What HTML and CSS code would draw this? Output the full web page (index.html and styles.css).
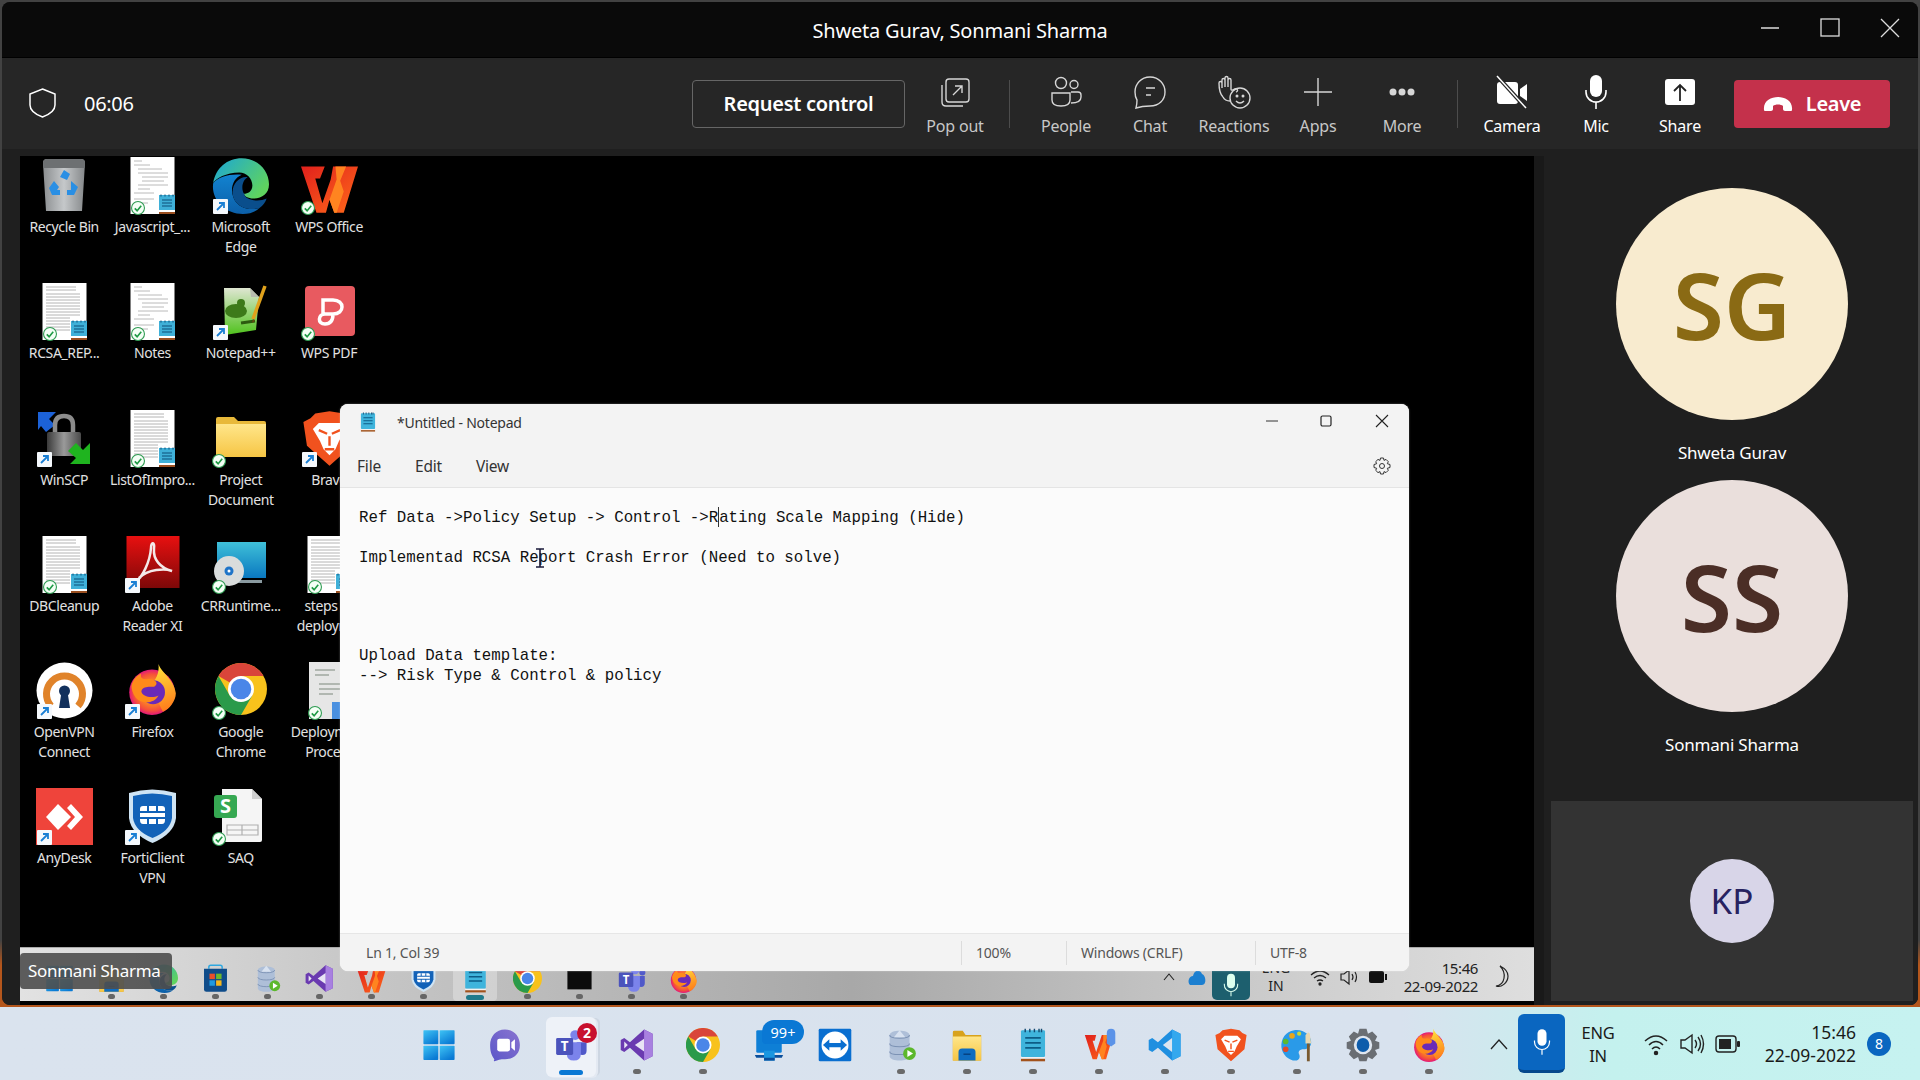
FILE: index.html
```html
<!DOCTYPE html>
<html lang="en">
<head>
  <meta charset="UTF-8" />
  <title>Shweta Gurav, Sonmani Sharma</title>
  <link rel="stylesheet" href="styles.css">
</head>
<body>
  <svg class="sprite" aria-hidden="true">
    <defs>
      <linearGradient id="g-edge" x1="0" y1="0" x2="1" y2="0.6"><stop offset="0" stop-color="#1aa6d8"/><stop offset="1" stop-color="#5fd35f"/></linearGradient>
      <linearGradient id="g-edge2" x1="0" y1="0" x2="0" y2="1"><stop offset="0" stop-color="#1283d0"/><stop offset="1" stop-color="#0c5fa8"/></linearGradient>
      <linearGradient id="g-wps" x1="0" y1="0" x2="1" y2="1"><stop offset="0" stop-color="#e0201c"/><stop offset="1" stop-color="#ff6a1a"/></linearGradient>
      <linearGradient id="g-bin" x1="0" y1="0" x2="1" y2="0"><stop offset="0" stop-color="#8b8e90"/><stop offset="0.5" stop-color="#c5c8ca"/><stop offset="1" stop-color="#85888a"/></linearGradient>
      <linearGradient id="g-npp" x1="0" y1="0" x2="0" y2="1"><stop offset="0" stop-color="#dfe6d2"/><stop offset="1" stop-color="#4fc21c"/></linearGradient>
      <linearGradient id="g-folder" x1="0" y1="0" x2="0" y2="1"><stop offset="0" stop-color="#ffe68a"/><stop offset="1" stop-color="#f6c544"/></linearGradient>
      <linearGradient id="g-adobe" x1="0" y1="0" x2="0" y2="1"><stop offset="0" stop-color="#e81010"/><stop offset="1" stop-color="#7d0808"/></linearGradient>
      <linearGradient id="g-cr" x1="0" y1="0" x2="0" y2="1"><stop offset="0" stop-color="#3fc0d8"/><stop offset="1" stop-color="#0a78c0"/></linearGradient>
      <linearGradient id="g-lock" x1="0" y1="0" x2="1" y2="0"><stop offset="0" stop-color="#3a3a3a"/><stop offset="0.5" stop-color="#9a9a9a"/><stop offset="1" stop-color="#4a4a4a"/></linearGradient>
      <linearGradient id="g-win" x1="0" y1="0" x2="0.6" y2="1"><stop offset="0" stop-color="#3fc4f5"/><stop offset="1" stop-color="#0a7ad4"/></linearGradient>
      <linearGradient id="g-meet" x1="1" y1="0" x2="0" y2="1"><stop offset="0" stop-color="#8a74d0"/><stop offset="1" stop-color="#5a56c8"/></linearGradient>
      <radialGradient id="g-fox"><stop offset="0.35" stop-color="#ff9f1a"/><stop offset="0.8" stop-color="#f5503a"/><stop offset="1" stop-color="#e3187a"/></radialGradient>
      <linearGradient id="g-flame" x1="0.4" y1="0" x2="0.6" y2="1"><stop offset="0" stop-color="#ffe13a"/><stop offset="1" stop-color="#ff7a1a"/></linearGradient>

      <symbol id="i-bin" viewBox="0 0 57 57">
        <path d="M7 6Q7 2 11 2H45Q49 2 49 6L46 54H10Z" fill="url(#g-bin)"/>
        <path d="M7 6Q7 2 11 2H45Q49 2 49 6L48.500 11H7.500Z" fill="#6d7072"/>
        <path d="M28 13L34 17 31 23 24 20ZM35 24L42 30 38 38 31 38 31 33 35 33ZM18 24L23 30 21 33 24 33 24 38 16 38 13 31Z" fill="#2a8fe4"/>
      </symbol>
      <symbol id="i-doc" viewBox="0 0 57 57">
        <rect x="6.500" y="0" width="44" height="57" fill="#fff"/>
        <path d="M10 4h8M10 8h16M14 12h24M14 16h30M18 20h26M18 24h22M14 28h30M14 32h12M10 36h20M10 42h20M10 46h14" stroke="#a8a8a8" stroke-width=".8"/>
        <rect x="35" y="38" width="16" height="15" fill="#3fb0d8"/>
        <path d="M38 43h10M38 46h10M38 49h10M37 37.500v2M41 37.500v2M45 37.500v2M49 37.500v2" stroke="#0d4f78" stroke-width="1"/>
        <rect x="35" y="53" width="16" height="2" fill="#fff"/><rect x="35" y="55" width="16" height="2" fill="#9a4f20"/>
      </symbol>
      <symbol id="i-doc2" viewBox="0 0 57 57">
        <rect x="6.500" y="0" width="44" height="57" fill="#fff"/>
        <path d="M10 4h30M10 7h30M10 11h34M10 14h34M10 17h34M10 20h34M10 23h34M10 26h34M10 29h34M10 32h34M10 35h24M10 38h24M10 41h24M10 44h24M10 47h24" stroke="#b4b4b4" stroke-width="1"/>
        <rect x="35" y="38" width="16" height="15" fill="#3fb0d8"/>
        <path d="M38 43h10M38 46h10M38 49h10M37 37.500v2M41 37.500v2M45 37.500v2M49 37.500v2" stroke="#0d4f78" stroke-width="1"/>
        <rect x="35" y="53" width="16" height="2" fill="#fff"/><rect x="35" y="55" width="16" height="2" fill="#9a4f20"/>
      </symbol>
      <symbol id="i-doc3" viewBox="0 0 57 57">
        <rect x="8" y="0" width="44" height="57" fill="#e6e6e6"/>
        <path d="M14 8h20M14 13h14M18 22h22M18 27h22M18 32h14" stroke="#a0a8a0" stroke-width="1.500"/>
        <rect x="31" y="40" width="26" height="17" fill="#4a90e0"/>
      </symbol>
      <symbol id="i-edge" viewBox="0 0 48 48">
        <path d="M1 22C3 9 13 1 25 1 38 1 48 11 48 23 48 31 42 35 35 35 30 35 27 33 27 31 30 31 34 29 34 24 34 18 29 13 23 13 12 13 3 18 1 22Z" fill="url(#g-edge)"/>
        <path d="M1 22C-1 36 11 48 26 48 32 48 37 46 40 43 33 45 22 44 18 34 15 26 18 18 25 15 15 14 5 17 1 22Z" fill="url(#g-edge2)"/>
        <path d="M18 34C22 44 33 45 40 43 43 41 45 38 46 35 40 38 28 37 27 31 24 26 26 19 30 17 22 16 15 25 18 34Z" fill="#0a4e8c"/>
      </symbol>
      <symbol id="i-wps" viewBox="0 0 48 48">
        <g transform="translate(0 5)">
          <path d="M0 3H20L16 13H12L18 34 25 14 27 3H48L36 42H28L24 31 21 42H13Z" fill="url(#g-wps)"/>
          <path d="M29 3H38L33 15 36 24 30 42H28L24 31 30 14Z" fill="#ff8420"/>
        </g>
      </symbol>
      <symbol id="i-wpspdf" viewBox="0 0 57 57">
        <rect x="4" y="3" width="50" height="50" rx="4" fill="#e85a60"/>
        <path d="M22 33V17H32C44 17 44 31 32 31H24C17 31 16 41 24 41 31 41 32 35 32 31" fill="none" stroke="#fff" stroke-width="3.500"/>
      </symbol>
      <symbol id="i-npp" viewBox="0 0 57 57">
        <path d="M12 5H38L47 14 44 47 13 52Z" fill="url(#g-npp)"/>
        <path d="M38 5L47 14H39Z" fill="#b8bcb0"/>
        <ellipse cx="24" cy="28" rx="11" ry="7" fill="#3d7a1a"/><circle cx="29" cy="20" r="4" fill="#3d7a1a"/>
        <path d="M29 40l14-2" stroke="#2c5a10" stroke-width="3"/>
        <path d="M41 36L53 3" stroke="#e0a21c" stroke-width="3.500"/><path d="M41 36L40 40 43 38Z" fill="#6a4a10"/>
      </symbol>
      <symbol id="i-winscp" viewBox="0 0 57 57">
        <path d="M2 2H20L13 9 19 15 10 22 5 16 2 20Z" fill="#1c62d8"/>
        <path d="M19 23V15Q19 6 28 6T37 15V23" fill="none" stroke="#8c8c8c" stroke-width="4.500"/>
        <rect x="11" y="22" width="34" height="24" rx="2" fill="url(#g-lock)"/>
        <path d="M54 33V54H34L40 48 32 41 40 33 47 40Z" fill="#1fb41f"/>
      </symbol>
      <symbol id="i-folder" viewBox="0 0 57 57">
        <path d="M4 9Q4 7 6 7H22L26 11H52Q54 11 54 13V47H4Z" fill="#e8b93a"/>
        <path d="M4 14H54V45Q54 47 52 47H6Q4 47 4 45Z" fill="url(#g-folder)"/>
      </symbol>
      <symbol id="i-brave" viewBox="0 0 48 48">
        <path d="M24 1L36 3 40 7 46 10 43 30 24 47 5 30 2 10 8 7 12 3Z" fill="#f1521e"/>
        <path d="M24 11H33L38 16 32 26 29 33 24 38 19 33 16 26 10 16 15 11Z" fill="#fff"/>
        <path d="M15 17L22 20M33 17L26 20M24 22V30M20 33H28" stroke="#f1521e" stroke-width="2" fill="none"/>
      </symbol>
      <symbol id="i-adobe" viewBox="0 0 57 57">
        <rect x="2.500" y="0" width="53" height="52" fill="url(#g-adobe)"/>
        <path d="M12 45C18 42 26 26 27 12 27 5 31 6 30 13 29 23 36 32 48 35 41 32 24 33 15 42" fill="none" stroke="#f4e8e8" stroke-width="2.500"/>
      </symbol>
      <symbol id="i-cr" viewBox="0 0 57 57">
        <rect x="5" y="6" width="49" height="36" fill="url(#g-cr)"/>
        <path d="M24 44H50V47H24Z" fill="#8a9aa0"/>
        <circle cx="17" cy="35" r="15" fill="#d9dcdc"/><circle cx="17" cy="35" r="4.500" fill="#1f74c8"/><circle cx="17" cy="35" r="1.500" fill="#fff"/>
      </symbol>
      <symbol id="i-ovpn" viewBox="0 0 57 57">
        <circle cx="28.500" cy="28.500" r="28" fill="#fff"/>
        <path d="M15 44A18 18 0 1 1 42 44" fill="none" stroke="#e0832a" stroke-width="7"/>
        <circle cx="28.500" cy="29" r="5.500" fill="#12305c"/><path d="M25.500 30H31.500L34 46H23Z" fill="#12305c"/>
      </symbol>
      <symbol id="i-fox" viewBox="0 0 48 48">
        <circle cx="24" cy="27" r="21" fill="url(#g-fox)"/>
        <path d="M30 1C33 10 44 14 46 28 46 35 40 43 34 45L22 20C27 17 31 10 30 1Z" fill="url(#g-flame)"/>
        <circle cx="25" cy="27" r="11" fill="#6a2ab8"/>
        <path d="M5 21C7 14 11 11 14 10 13 14 15 15 19 15 27 14 31 19 26 22 22 22 16 21 14 26 15 31 24 33 30 30 26 38 14 38 9 32 6 28 5 24 5 21Z" fill="#ff8a1a"/>
      </symbol>
      <symbol id="i-chrome" viewBox="0 0 48 48">
        <circle cx="24" cy="24" r="24" fill="#f8c21c"/>
        <path d="M3.200 12A24 24 0 0 1 44.800 12H24L13.600 18Z" fill="#d9453a"/>
        <path d="M24 48A24 24 0 0 1 3.200 12L13.600 30H34.400Z" fill="#2a9a4a"/>
        <circle cx="24" cy="24" r="12" fill="#fff"/><circle cx="24" cy="24" r="9.500" fill="#4a86e8"/>
      </symbol>
      <symbol id="i-anydesk" viewBox="0 0 57 57">
        <rect width="57" height="57" fill="#ef443b"/>
        <path d="M22 16L35 29 22 42 10 29Z" fill="#fff"/>
        <path d="M35 16L47 29 35 42 31 38 39 29 31 20Z" fill="#fff"/>
      </symbol>
      <symbol id="i-forti" viewBox="0 0 57 57">
        <path d="M5 5Q28 -2 52 5V30Q50 46 28.500 55 7 46 5 30Z" fill="#cfe4f4"/>
        <path d="M9 8Q28 3 48 8V30Q46 43 28.500 50 11 43 9 30Z" fill="#1262b8"/>
        <path d="M19 18H38Q41 18 41 21V32Q41 36 38 36H19Q16 36 16 32V21Q16 18 19 18Z" fill="#fff"/>
        <path d="M16 24H41M16 30H41M24 18V24M33 18V24M24 30V36M33 30V36" stroke="#1262b8" stroke-width="2"/>
      </symbol>
      <symbol id="i-saq" viewBox="0 0 57 57">
        <path d="M10 1H40L50 11V52Q50 54 48 54H12Q10 54 10 52Z" fill="#f5f5f5"/>
        <path d="M40 1L50 11H40Z" fill="#cfcfcf"/>
        <rect x="2" y="7" width="23" height="23" rx="3" fill="#36a852"/>
        <text x="13.500" y="25" class="svg-s">S</text>
        <path d="M15 37H46V47H15ZM15 42H46M30 37V47" fill="none" stroke="#b0b0b0" stroke-width="1.200"/>
      </symbol>
      <symbol id="i-notepad" viewBox="0 0 48 48">
        <rect x="7" y="3" width="34" height="38" rx="2" fill="#3fb4dc"/>
        <path d="M13 14H35M13 21H35M13 28H35" stroke="#0d5c86" stroke-width="2.500"/>
        <path d="M13 1V6M19.500 1V6M26 1V6M32.500 1V6M36 1V6" stroke="#134a70" stroke-width="2"/>
        <rect x="7" y="41" width="34" height="2.500" fill="#f2f2f2"/><rect x="7" y="43.500" width="34" height="3.500" fill="#a2521c"/>
      </symbol>
      <symbol id="i-vs" viewBox="0 0 48 48">
        <path d="M34 2L46 8V40L34 46 14 28 6 34 1 31V17L6 14 14 20Z" fill="#6a3ab0"/>
        <path d="M34 2L46 8V40L34 46Z" fill="#a880e0"/>
        <path d="M34 15V33L21 24Z" fill="#e8e4f4"/>
        <path d="M6 19V29L11 24Z" fill="#e8e4f4"/>
      </symbol>
      <symbol id="i-win" viewBox="0 0 48 48">
        <rect x="2" y="3" width="21" height="20" rx="1" fill="url(#g-win)"/><rect x="25" y="3" width="21" height="20" rx="1" fill="url(#g-win)"/>
        <rect x="2" y="25" width="21" height="20" rx="1" fill="url(#g-win)"/><rect x="25" y="25" width="21" height="20" rx="1" fill="url(#g-win)"/>
      </symbol>
      <symbol id="i-meet" viewBox="0 0 48 48">
        <path d="M24 2C37 2 45 12 45 24 45 37 36 44 24 44 20 44 16 44 9 47 8 47 8 46 9 44 4 38 3 31 3 24 3 12 11 2 24 2Z" fill="url(#g-meet)"/>
        <rect x="13" y="15" width="18" height="18" rx="3" fill="#fff"/><path d="M33 20L38 16V32L33 28Z" fill="#fff"/>
      </symbol>
      <symbol id="i-teams" viewBox="0 0 48 48">
        <circle cx="30" cy="10" r="7" fill="#7b83eb"/><circle cx="42" cy="14" r="5" fill="#5059c9"/>
        <path d="M32 20H46V32Q46 38 40 38 34 38 34 32Z" fill="#5059c9"/>
        <path d="M18 20H38V36Q38 46 28 46 18 46 18 36Z" fill="#7b83eb"/>
        <rect x="3" y="14" width="24" height="24" rx="2" fill="#4b53bc"/>
        <text x="15" y="33" class="svg-t">T</text>
      </symbol>
      <symbol id="i-store" viewBox="0 0 48 48">
        <path d="M4 38H44L42 42H6Z" fill="#0a4f9c"/>
        <rect x="6" y="3" width="36" height="32" rx="2" fill="#0e7fd6"/>
        <rect x="17" y="32" width="15" height="14" fill="#1a96e0"/><rect x="17" y="42" width="15" height="4" fill="#0a4f9c"/>
      </symbol>
      <symbol id="i-tv" viewBox="0 0 48 48">
        <rect x="1" y="1" width="46" height="46" rx="2" fill="#0a6fd0"/>
        <circle cx="24" cy="24" r="19" fill="#fff"/>
        <path d="M7 24L16 16V21H32V16L41 24 32 32V27H16V32Z" fill="#0a6fd0"/>
      </symbol>
      <symbol id="i-db" viewBox="0 0 48 48">
        <path d="M8 10C8 2 36 2 36 10V40C36 48 8 48 8 40Z" fill="#aebfd8"/>
        <path d="M8 10C8 16 36 16 36 10M8 22C8 28 36 28 36 22M8 33C8 39 36 39 36 33" fill="none" stroke="#7c92b4" stroke-width="1.500"/>
        <path d="M22 3L30 13H14Z" fill="#d8e2f0"/>
        <circle cx="36" cy="36" r="9" fill="#5cb82c"/><path d="M33 31L41 36 33 41Z" fill="#fff"/>
      </symbol>
      <symbol id="i-explorer" viewBox="0 0 48 48">
        <path d="M4 6Q4 4 6 4H18L22 10H44V46H4Z" fill="#d8a21c"/>
        <path d="M4 12H44V46H4Z" fill="url(#g-folder)"/>
        <path d="M12 46V34Q12 29 17 29H31Q36 29 36 34V46Z" fill="#0e6cc0"/>
        <path d="M19 37H29" stroke="#063f7c" stroke-width="2"/>
      </symbol>
      <symbol id="i-wpsbar" viewBox="0 0 48 48">
        <g transform="translate(4 0)">
          <path d="M0 10H16L14 18H11L16 34 22 16 24 10H40L30 44H24L20 34 17 44H11Z" fill="url(#g-wps)"/>
          <path d="M26 10H33L29 20 31 26 26 44H24L20 34 26 18Z" fill="#ff8420"/>
          <path d="M31 7Q31 1 37 1T43 7V22L37 26 31 22Z" fill="#5b93e8"/>
        </g>
      </symbol>
      <symbol id="i-code" viewBox="0 0 48 48">
        <path d="M34 2L46 8V40L34 46 14 28 6 34 1 31V17L6 14 14 20Z" fill="#1f8fe0"/>
        <path d="M34 2L46 8V40L34 46Z" fill="#34a8ee"/>
        <path d="M34 14V34L21 24Z" fill="#dbe5f0"/>
      </symbol>
      <symbol id="i-paint" viewBox="0 0 48 48">
        <path d="M20 3C8 5 1 15 2 27 3 37 12 46 22 46 27 46 29 41 27 37 25 33 28 30 33 30 40 30 44 26 44 20 44 10 33 1 20 3Z" fill="#2a9ae8"/>
        <circle cx="17" cy="11" r="4" fill="#e8a61c"/><circle cx="8" cy="19" r="4" fill="#5cb82c"/><circle cx="27" cy="8" r="3" fill="#c8d83a"/><circle cx="8" cy="30" r="4" fill="#e04a2a"/>
        <path d="M36 22H44L42 8 40 6 36 10Z" fill="#e8d8b0"/><rect x="38" y="22" width="4" height="25" fill="#7a5a30"/>
      </symbol>
      <symbol id="i-gear" viewBox="0 0 48 48">
        <path d="M19 1H29L31 8 37 5 44 12 41 18 47 20V29L41 31 44 37 37 44 31 41 29 47H19L17 41 11 44 4 37 7 31 1 29V20L7 18 4 12 11 5 17 8Z" fill="#6a6e73"/>
        <circle cx="24" cy="24" r="13" fill="#dfe6ef"/><ellipse cx="24" cy="24" rx="9" ry="10" fill="#0d5cab"/>
      </symbol>
      <symbol id="i-bag" viewBox="0 0 48 48">
        <path d="M13 8V5Q13 2 16 2H32Q35 2 35 5V8" fill="none" stroke="#2fa8e0" stroke-width="2.500"/>
        <path d="M5 8H43V42Q43 46 39 46H9Q5 46 5 42Z" fill="#0f4c8a"/>
        <rect x="14" y="16" width="9" height="9" fill="#e8502a"/><rect x="25" y="16" width="9" height="9" fill="#6cb82c"/>
        <rect x="14" y="27" width="9" height="9" fill="#1f9ae0"/><rect x="25" y="27" width="9" height="9" fill="#f5b71c"/>
      </symbol>
      <symbol id="i-term" viewBox="0 0 48 48"><rect x="4" y="6" width="40" height="36" fill="#0b0b0b"/><path d="M4 6H44V12H4Z" fill="#3a3a3a"/></symbol>
      <symbol id="i-sc" viewBox="0 0 15 15">
        <rect width="15" height="15" rx="1" fill="#f4f8fc"/>
        <path d="M4 11L11 4M6 4H11V9" fill="none" stroke="#1a7fd4" stroke-width="1.800"/>
      </symbol>
      <symbol id="i-chk" viewBox="0 0 13 13">
        <circle cx="6.500" cy="6.500" r="6" fill="#f4fff6" stroke="#2c9a50" stroke-width="1"/>
        <path d="M3.500 6.800L5.700 9 9.500 4.500" fill="none" stroke="#1f9a45" stroke-width="1.500"/>
      </symbol>
      <symbol id="i-mic" viewBox="0 0 24 36">
        <rect x="6" y="1" width="12" height="22" rx="6"/>
        <path d="M2 16V18A10 10 0 0 0 22 18V16M12 28V35" fill="none" stroke="currentColor" stroke-width="1.600"/>
      </symbol>
    </defs>
  </svg>

  <div class="teams">
    <div class="titlebar">
      <span></span>
      <div class="title">Shweta Gurav, Sonmani Sharma</div>
      <div class="win-ctl">
        <button class="ctl"><svg width="20" height="20" viewBox="0 0 20 20"><path d="M1 10H19" stroke="#ddd" stroke-width="1.300"/></svg></button>
        <button class="ctl"><svg width="20" height="20" viewBox="0 0 20 20"><rect x="1" y="1" width="18" height="17" fill="none" stroke="#ddd" stroke-width="1.300"/></svg></button>
        <button class="ctl"><svg width="20" height="20" viewBox="0 0 20 20"><path d="M1 1L19 19M19 1L1 19" stroke="#ddd" stroke-width="1.300"/></svg></button>
      </div>
    </div>

    <div class="toolbar">
      <svg class="shield" width="27" height="30" viewBox="0 0 27 30"><path d="M13.500 1L26 6V17C26 23 19 27 13.500 29 8 27 1 23 1 17V6Z" fill="none" stroke="#fff" stroke-width="1.500"/></svg>
      <span class="timer">06:06</span>
      <div class="tools">
        <button class="req">Request control</button>
        <div class="tool"><svg width="32" height="32" viewBox="0 0 32 32" fill="none" stroke="#d6d6d6" stroke-width="1.400"><rect x="7" y="3" width="23" height="23" rx="3"/><path d="M3 9V26Q3 30 7 30H24M14 19L23 10M16 10H23V17"/></svg><span>Pop out</span></div>
        <i class="sep"></i>
        <div class="tool"><svg width="32" height="32" viewBox="0 0 32 32" fill="none" stroke="#d6d6d6" stroke-width="1.400"><circle cx="11" cy="7" r="5.500"/><circle cx="24" cy="8.500" r="4"/><path d="M2 17H20V24C20 28 17 30 11 30 5 30 2 28 2 24ZM21 16H28Q31 16 31 19V21C31 25 27 27 21 27"/></svg><span>People</span></div>
        <div class="tool"><svg width="32" height="34" viewBox="0 0 32 34" fill="none" stroke="#d6d6d6" stroke-width="1.400"><path d="M16 2C25 2 31 9 31 17 31 25 25 31 16 31 13 31 8 31 2 33 3 29 3 27 3 25 1 22 1 19 1 17 1 9 7 2 16 2Z"/><path d="M12 13H21M12 20H17"/></svg><span>Chat</span></div>
        <div class="tool"><svg width="34" height="34" viewBox="0 0 34 34" fill="none" stroke="#d6d6d6" stroke-width="1.400"><path d="M6 22C3 19 2 14 2 8 2 6 5 6 5 8V13M5 10V5C5 3 8 3 8 5V12M8 5V3C8 1 11 1 11 3V12M11 5C11 3 14 3 14 5V14C14 16 16 15 18 14 20 13 22 16 19 17"/><circle cx="23" cy="23" r="10"/><circle cx="20" cy="21" r=".8"/><circle cx="26" cy="21" r=".8"/><path d="M19 26Q23 30 27 26M6 22Q8 26 13 26"/></svg><span>Reactions</span></div>
        <div class="tool"><svg width="30" height="30" viewBox="0 0 30 30"><path d="M15 1V29M1 15H29" stroke="#d6d6d6" stroke-width="1.400"/></svg><span>Apps</span></div>
        <div class="tool"><svg width="28" height="10" viewBox="0 0 28 10" fill="#d6d6d6"><circle cx="5" cy="5" r="3.500"/><circle cx="14" cy="5" r="3.500"/><circle cx="23" cy="5" r="3.500"/></svg><span>More</span></div>
        <i class="sep sep-2"></i>
        <div class="tool on"><svg width="32" height="34" viewBox="0 0 32 34"><rect x="1" y="7" width="21" height="22" rx="3" fill="#fff"/><path d="M24 14L31 9V26L24 21Z" fill="#fff"/><path d="M1 1L30 33" stroke="#262626" stroke-width="4"/><path d="M1 1L30 33" stroke="#fff" stroke-width="1.500"/></svg><span>Camera</span></div>
        <div class="tool on"><svg class="mic-w" width="24" height="36"><use href="#i-mic"/></svg><span>Mic</span></div>
        <div class="tool on"><svg width="32" height="32" viewBox="0 0 32 32"><rect x="1" y="3" width="30" height="26" rx="3" fill="#fff"/><path d="M16 25V9M10 15L16 9 22 15" fill="none" stroke="#222" stroke-width="1.800"/></svg><span>Share</span></div>
        <button class="leave"><svg width="30" height="18" viewBox="0 0 30 18"><path d="M1 15C0 6 8 2 15 2S30 6 29 15C29 16 28 16 27 16H22C21 16 20 15 20 14V11C18 9 12 9 10 11V14C10 15 9 16 8 16H3C2 16 1 16 1 15Z" fill="#fff"/></svg>Leave</button>
      </div>
    </div>

    <div class="meeting">
      <div class="stage">
        <div class="desktop">
          <div class="di"><span class="di-ic"><svg><use href="#i-bin"/></svg></span><span class="di-lb">Recycle Bin</span></div>
          <div class="di"><span class="di-ic"><svg><use href="#i-doc"/></svg><svg class="ov chk in"><use href="#i-chk"/></svg></span><span class="di-lb">Javascript_...</span></div>
          <div class="di"><span class="di-ic"><svg><use href="#i-edge"/></svg><svg class="ov sc"><use href="#i-sc"/></svg></span><span class="di-lb">Microsoft Edge</span></div>
          <div class="di"><span class="di-ic"><svg><use href="#i-wps"/></svg><svg class="ov chk"><use href="#i-chk"/></svg></span><span class="di-lb">WPS Office</span></div>

          <div class="di"><span class="di-ic"><svg><use href="#i-doc2"/></svg><svg class="ov chk in"><use href="#i-chk"/></svg></span><span class="di-lb">RCSA_REP...</span></div>
          <div class="di"><span class="di-ic"><svg><use href="#i-doc"/></svg><svg class="ov chk in"><use href="#i-chk"/></svg></span><span class="di-lb">Notes</span></div>
          <div class="di"><span class="di-ic"><svg><use href="#i-npp"/></svg><svg class="ov sc"><use href="#i-sc"/></svg></span><span class="di-lb">Notepad++</span></div>
          <div class="di"><span class="di-ic"><svg><use href="#i-wpspdf"/></svg><svg class="ov chk"><use href="#i-chk"/></svg></span><span class="di-lb">WPS PDF</span></div>

          <div class="di"><span class="di-ic"><svg><use href="#i-winscp"/></svg><svg class="ov sc"><use href="#i-sc"/></svg></span><span class="di-lb">WinSCP</span></div>
          <div class="di"><span class="di-ic"><svg><use href="#i-doc2"/></svg><svg class="ov chk in"><use href="#i-chk"/></svg></span><span class="di-lb">ListOfImpro...</span></div>
          <div class="di"><span class="di-ic"><svg><use href="#i-folder"/></svg><svg class="ov chk"><use href="#i-chk"/></svg></span><span class="di-lb">Project Document</span></div>
          <div class="di"><span class="di-ic"><svg><use href="#i-brave"/></svg><svg class="ov sc"><use href="#i-sc"/></svg></span><span class="di-lb">Brave</span></div>

          <div class="di"><span class="di-ic"><svg><use href="#i-doc2"/></svg><svg class="ov chk in"><use href="#i-chk"/></svg></span><span class="di-lb">DBCleanup</span></div>
          <div class="di"><span class="di-ic"><svg><use href="#i-adobe"/></svg><svg class="ov sc"><use href="#i-sc"/></svg></span><span class="di-lb">Adobe Reader XI</span></div>
          <div class="di"><span class="di-ic"><svg><use href="#i-cr"/></svg><svg class="ov chk"><use href="#i-chk"/></svg></span><span class="di-lb">CRRuntime...</span></div>
          <div class="di"><span class="di-ic"><svg><use href="#i-doc2"/></svg><svg class="ov chk in"><use href="#i-chk"/></svg></span><span class="di-lb">steps to deploym...</span></div>

          <div class="di"><span class="di-ic"><svg><use href="#i-ovpn"/></svg><svg class="ov sc"><use href="#i-sc"/></svg></span><span class="di-lb">OpenVPN Connect</span></div>
          <div class="di"><span class="di-ic"><svg class="sm"><use href="#i-fox"/></svg><svg class="ov sc"><use href="#i-sc"/></svg></span><span class="di-lb">Firefox</span></div>
          <div class="di"><span class="di-ic"><svg class="sm"><use href="#i-chrome"/></svg><svg class="ov chk"><use href="#i-chk"/></svg></span><span class="di-lb">Google Chrome</span></div>
          <div class="di"><span class="di-ic"><svg><use href="#i-doc3"/></svg><svg class="ov chk in"><use href="#i-chk"/></svg></span><span class="di-lb">Deployment Process</span></div>

          <div class="di"><span class="di-ic"><svg><use href="#i-anydesk"/></svg><svg class="ov sc"><use href="#i-sc"/></svg></span><span class="di-lb">AnyDesk</span></div>
          <div class="di"><span class="di-ic"><svg><use href="#i-forti"/></svg><svg class="ov sc"><use href="#i-sc"/></svg></span><span class="di-lb">FortiClient VPN</span></div>
          <div class="di"><span class="di-ic"><svg><use href="#i-saq"/></svg><svg class="ov chk"><use href="#i-chk"/></svg></span><span class="di-lb">SAQ</span></div>

          <div class="notepad">
            <div class="np-head">
              <div class="np-title">
                <svg class="np-icon" width="20" height="22"><use href="#i-notepad"/></svg>
                <span>*Untitled - Notepad</span>
                <div class="np-ctl">
                  <svg width="14" height="14" viewBox="0 0 14 14"><path d="M1 7H13" stroke="#333" stroke-width="1"/></svg>
                  <svg width="14" height="14" viewBox="0 0 14 14"><rect x="2" y="2" width="10" height="10" rx="1.500" fill="none" stroke="#222" stroke-width="1.200"/></svg>
                  <svg width="14" height="14" viewBox="0 0 14 14"><path d="M1 1L13 13M13 1L1 13" stroke="#222" stroke-width="1.100"/></svg>
                </div>
              </div>
              <div class="np-menu">
                <span>File</span><span>Edit</span><span>View</span>
                <svg class="np-gear" width="18" height="18" viewBox="0 0 18 18" fill="none" stroke="#333" stroke-width="1"><path d="M7.500 1H10.500L11 3.400 13 2.400 15.300 4.700 14.300 6.700 17 7.500V10.500L14.300 11.300 15.300 13.300 13 15.600 11 14.600 10.500 17H7.500L7 14.600 5 15.600 2.700 13.300 3.700 11.300 1 10.500V7.500L3.700 6.700 2.700 4.700 5 2.400 7 3.400Z"/><circle cx="9" cy="9" r="2.500"/></svg>
              </div>
            </div>
            <div class="np-text">Ref Data -&gt;Policy Setup -&gt; Control -&gt;R<i class="caret"></i>ating Scale Mapping (Hide)

Implementad RCSA Report Crash Error (Need to solve)




Upload Data template:
--&gt; Risk Type &amp; Control &amp; policy</div>
            <svg class="ibeam" width="10" height="20" viewBox="0 0 10 20" fill="none" stroke="#1a1a3a" stroke-width="1.600"><path d="M1 1H9M5 1V19M1 19H9"/></svg>
            <div class="np-status">
              <span class="cell first">Ln 1, Col 39</span>
              <span class="cell zoomc">100%</span>
              <span class="cell eol">Windows (CRLF)</span>
              <span class="cell enc">UTF-8</span>
            </div>
          </div>
        </div>

        <div class="rbar">
          <div class="rslot"><svg><use href="#i-win"/></svg></div>
          <div class="rslot run"><svg><use href="#i-explorer"/></svg></div>
          <div class="rslot run"><svg><use href="#i-edge"/></svg></div>
          <div class="rslot run"><svg><use href="#i-bag"/></svg></div>
          <div class="rslot run"><svg><use href="#i-db"/></svg></div>
          <div class="rslot run"><svg><use href="#i-vs"/></svg></div>
          <div class="rslot run"><svg><use href="#i-wps"/></svg></div>
          <div class="rslot run"><svg><use href="#i-forti"/></svg></div>
          <div class="rslot cur"><svg><use href="#i-notepad"/></svg></div>
          <div class="rslot run"><svg><use href="#i-chrome"/></svg></div>
          <div class="rslot run"><svg><use href="#i-term"/></svg></div>
          <div class="rslot run"><svg><use href="#i-teams"/></svg></div>
          <div class="rslot run"><svg><use href="#i-fox"/></svg></div>
          <div class="rtray">
            <svg class="rchev" width="12" height="8" viewBox="0 0 12 8"><path d="M1 7L6 1 11 7" fill="none" stroke="#222" stroke-width="1.100"/></svg>
            <svg class="rcloud" width="20" height="22" viewBox="0 0 20 22"><path d="M3 19C0 16 2 10 6 10 7 4 13 3 15 8 19 9 20 19 15 19Z" fill="#1c7fd0"/></svg>
            <div class="rmic"><svg width="16" height="26"><use href="#i-mic"/></svg></div>
            <div class="rlang">ENG<br>IN</div>
            <svg class="rwifi" width="22" height="18" viewBox="0 0 22 18" fill="none" stroke="#222" stroke-width="1.300"><path d="M2 7Q11 -1 20 7M5 10Q11 5 17 10M8 13Q11 11 14 13"/><circle cx="11" cy="16" r="1" fill="#222"/></svg>
            <svg class="rvol" width="20" height="18" viewBox="0 0 20 18" fill="none" stroke="#222" stroke-width="1.200"><path d="M1 6H4L9 2V16L4 12H1ZM12 6Q14 9 12 12M15 4Q18 9 15 14"/></svg>
            <svg class="rbatt" width="22" height="18" viewBox="0 0 22 18"><rect x="2" y="3" width="15" height="12" rx="2" fill="#111"/><rect x="18" y="6" width="2" height="6" fill="#111"/></svg>
            <div class="rclock">15:46<br>22-09-2022</div>
            <svg class="rmoon" width="16" height="24" viewBox="0 0 16 24" fill="none" stroke="#222" stroke-width="1.200"><path d="M7 1C14 8 12 20 3 21 8 23 15 18 15 11 15 7 11 3 7 1Z"/></svg>
          </div>
        </div>
        <div class="name-tag">Sonmani Sharma</div>
      </div>

      <div class="roster">
        <div class="avatar sg">SG</div>
        <div class="who">Shweta Gurav</div>
        <div class="avatar ss">SS</div>
        <div class="who">Sonmani Sharma</div>
        <div class="tile"><div class="kp">KP</div></div>
      </div>
    </div>
  </div>

  <div class="taskbar">
    <div class="tslot"><svg class="tstart"><use href="#i-win"/></svg></div>
    <div class="tslot"><svg><use href="#i-meet"/></svg></div>
    <div class="tslot active"><svg><use href="#i-teams"/></svg><b class="bdg-red">2</b></div>
    <div class="tslot run"><svg><use href="#i-vs"/></svg></div>
    <div class="tslot run"><svg><use href="#i-chrome"/></svg></div>
    <div class="tslot"><svg><use href="#i-store"/></svg><b class="bdg-blue">99+</b></div>
    <div class="tslot"><svg><use href="#i-tv"/></svg></div>
    <div class="tslot run"><svg><use href="#i-db"/></svg></div>
    <div class="tslot run"><svg><use href="#i-explorer"/></svg></div>
    <div class="tslot run"><svg><use href="#i-notepad"/></svg></div>
    <div class="tslot run"><svg><use href="#i-wpsbar"/></svg></div>
    <div class="tslot run"><svg><use href="#i-code"/></svg></div>
    <div class="tslot run"><svg><use href="#i-brave"/></svg></div>
    <div class="tslot run"><svg><use href="#i-paint"/></svg></div>
    <div class="tslot run"><svg><use href="#i-gear"/></svg></div>
    <div class="tslot run"><svg><use href="#i-fox"/></svg></div>
    <div class="tray">
      <svg class="chev" width="18" height="12" viewBox="0 0 18 12"><path d="M1 11L9 2 17 11" fill="none" stroke="#222" stroke-width="1.300"/></svg>
      <div class="micbox"><svg width="18" height="34"><use href="#i-mic"/></svg></div>
      <div class="lang">ENG<br>IN</div>
      <svg class="wifi" width="26" height="24" viewBox="0 0 26 24" fill="none" stroke="#222" stroke-width="1.500"><path d="M2 9Q13 -1 24 9M6 13Q13 6 20 13M9 17Q13 13 17 17"/><circle cx="13" cy="21" r="1.500" fill="#222"/></svg>
      <svg class="vol" width="26" height="24" viewBox="0 0 26 24" fill="none" stroke="#222" stroke-width="1.400"><path d="M1 8H5L12 3V21L5 16H1ZM15 8Q18 12 15 16M18 5Q23 12 18 19M21 3Q26 12 21 21"/></svg>
      <svg class="batt" width="26" height="20" viewBox="0 0 26 20"><rect x="1" y="2" width="20" height="16" rx="3" fill="none" stroke="#222" stroke-width="1.400"/><rect x="4" y="5" width="12" height="10" fill="#222"/><rect x="22" y="7" width="3" height="6" rx="1" fill="#222"/></svg>
      <div class="clock">15:46<br>22-09-2022</div>
      <div class="notif">8</div>
    </div>
  </div>
</body>
</html>
```

FILE: styles.css
```css
* { box-sizing: border-box; margin: 0; padding: 0; }
html, body { width: 1920px; height: 1080px; overflow: hidden; }
body {
  font-family: 'Noto Sans', 'Open Sans', sans-serif;
  background: linear-gradient(to bottom, #424242 0, #424242 940px, #b4561c 965px, #b4561c 100%);
  display: flex;
  flex-direction: column;
}
button { font: inherit; background: none; border: none; color: inherit; }
.sprite { position: absolute; width: 0; height: 0; }
.svg-s { font: bold 20px 'Noto Sans', sans-serif; fill: #fff; text-anchor: middle; }
.svg-t { font: bold 19px 'Noto Sans', sans-serif; fill: #fff; text-anchor: middle; }

/* meeting window */
.teams {
  width: 1916px;
  height: 1003px;
  margin: 2px 0 0 2px;
  border-radius: 8px;
  overflow: hidden;
  background: #1f1f1f;
  display: flex;
  flex-direction: column;
  flex: none;
}
.titlebar {
  height: 56px;
  flex: none;
  background: #0a0a0a;
  border-bottom: 1px solid #000;
  display: grid;
  grid-template-columns: 1fr auto 1fr;
  align-items: center;
  color: #fff;
}
.title { font-size: 20px; letter-spacing: -0.2px; margin-top: 2px; }
.win-ctl { display: flex; justify-content: flex-end; margin: -3px -2px 0 0; }
.ctl { width: 60px; height: 30px; display: flex; align-items: center; justify-content: center; }

.toolbar {
  height: 91px;
  flex: none;
  background: #262626;
  display: flex;
  align-items: center;
  padding: 0 28px 0 27px;
  color: #fff;
}
.shield { margin-top: -1px; }
.timer { margin-left: 28px; font-size: 20px; letter-spacing: -0.3px; }
.tools { margin-left: auto; display: flex; align-items: center; }
.req {
  width: 213px;
  height: 48px;
  border: 1px solid #666;
  border-radius: 4px;
  font-size: 20px;
  font-weight: 600;
  letter-spacing: -0.3px;
  margin-right: 8px;
}
.tool {
  width: 84px;
  height: 66px;
  display: flex;
  flex-direction: column;
  align-items: center;
  color: #c8c8c8;
  font-size: 16px;
  letter-spacing: -0.2px;
  position: relative;
}
.tool svg { position: absolute; left: 50%; top: 21px; transform: translate(-50%, -50%); }
.tool span { position: absolute; top: 44px; line-height: 22px; white-space: nowrap; }
.tool.on { color: #fff; }
.mic-w { color: #fff; fill: #fff; }
.sep { width: 1px; height: 48px; background: #4c4c4c; margin: 0 14px 0 12px; }
.sep-2 { margin: 0 12px 0 13px; }
.leave {
  width: 156px;
  height: 48px;
  background: #c4314b;
  border-radius: 4px;
  margin-left: 12px;
  display: flex;
  align-items: center;
  justify-content: center;
  gap: 13px;
  font-size: 20px;
  font-weight: 600;
  letter-spacing: -0.3px;
  color: #fff;
}

/* shared screen + roster */
.meeting {
  flex: 1;
  display: flex;
  padding: 7px 0 0 18px;
  min-height: 0;
  background: #1f1f1f;
}
.stage {
  width: 1514px;
  flex: none;
  position: relative;
  background: #000;
  display: flex;
  flex-direction: column;
  padding-bottom: 4px;
}
.desktop {
  flex: 1;
  position: relative;
  display: grid;
  grid-template-columns: repeat(4, 88.300px);
  grid-auto-rows: 126.300px;
  align-content: start;
  padding-top: 1px;
  min-height: 0;
}
.di { display: flex; flex-direction: column; align-items: center; }
.di-ic { position: relative; width: 57px; height: 57px; display: block; }
.di-ic > svg { width: 57px; height: 57px; display: block; }
.di-ic > svg.sm { width: 52px; height: 52px; margin: 1px auto 0; }
.di-ic > svg.ov { position: absolute; }
.di-ic > svg.sc { width: 15px; height: 15px; left: 1px; bottom: 0; }
.di-ic > svg.chk { width: 14px; height: 14px; left: 0; bottom: -1px; }
.di-ic > svg.chk.in { left: 7px; }
.di-lb {
  margin-top: 3px;
  width: 88px;
  font-size: 14px;
  line-height: 20px;
  letter-spacing: -0.38px;
  text-align: center;
  color: #e2e2e2;
}

/* notepad window */
.notepad {
  position: absolute;
  left: 320px;
  top: 248px;
  width: 1069px;
  height: 567px;
  z-index: 3;
  border-radius: 8px;
  overflow: hidden;
  background: #fbfbfb;
  box-shadow: 0 0 2px rgba(255,255,255,.4);
  display: flex;
  flex-direction: column;
}
.np-head { height: 84px; flex: none; background: #f3f3f3; border-bottom: 1px solid #e4e4e4; }
.np-title {
  height: 36px;
  display: flex;
  align-items: center;
  padding-left: 18px;
  font-size: 14px;
  letter-spacing: -0.25px;
  color: #333;
}
.np-icon { margin-right: 19px; }
.np-ctl { margin-left: auto; margin-top: -2px; display: flex; gap: 40px; padding-right: 20px; }
.np-ctl svg:nth-child(2) { margin-right: 2px; }
.np-menu {
  height: 47px;
  padding: 4px 18px 0 17px;
  display: flex;
  align-items: center;
  gap: 34px;
  font-size: 15.500px;
  letter-spacing: -0.2px;
  color: #333;
}
.np-gear { margin-left: auto; }
.np-text {
  flex: 1;
  padding: 19px 0 0 19px;
  font-family: 'Liberation Mono', monospace;
  font-size: 15.750px;
  line-height: 19.750px;
  white-space: pre;
  color: #111;
}
.caret { display: inline-block; width: 0; height: 20px; border-left: 1px solid #333; vertical-align: -5px; }
.ibeam { position: absolute; left: 195px; top: 144px; }
.np-status {
  height: 38px;
  flex: none;
  background: #f3f3f3;
  border-top: 1px solid #e6e6e6;
  display: flex;
  align-items: center;
  font-size: 14px;
  letter-spacing: -0.2px;
  color: #555;
}
.cell { height: 24px; line-height: 24px; border-left: 1px solid #dcdcdc; padding-left: 14px; }
.cell.first { width: 621px; padding-left: 26px; border-left: none; }
.cell.zoomc { width: 105px; }
.cell.eol { width: 189px; }
.cell.enc { flex: 1; }

/* taskbar of the shared machine */
.rbar {
  height: 54px;
  flex: none;
  background: linear-gradient(to right, #e2e2e2 0, #c4c4c4 25%, #a8a8a8 55%, #cfcfcf 85%, #dedede 100%);
  border-top: 1px solid #aaa;
  display: flex;
  padding-left: 13px;
}
.rslot { width: 52px; position: relative; display: flex; justify-content: center; padding-top: 16px; }
.rslot svg { width: 29px; height: 29px; }
.rslot.run::after {
  content: "";
  position: absolute;
  left: 50%;
  bottom: 2px;
  width: 7px;
  height: 5px;
  margin-left: -3px;
  border-radius: 3px;
  background: #666;
}
.rslot.cur { background: rgba(255,255,255,.3); border-radius: 4px; margin: 2px 4px 0; width: 44px; padding-top: 14px; }
.rslot.cur::after {
  content: "";
  position: absolute;
  left: 50%;
  bottom: 1px;
  width: 18px;
  height: 5px;
  margin-left: -9px;
  border-radius: 3px;
  background: #1f7a8c;
}
.rtray {
  flex: 1;
  display: flex;
  align-items: center;
  padding-top: 4px;
  font-size: 14px;
  color: #222;
  padding-left: 446px;
}
.rchev { margin-left: 8px; }
.rcloud { margin-left: 12px; }
.rmic {
  width: 38px;
  height: 44px;
  margin: 3px 0 0 5px;
  flex: none;
  border-radius: 0 0 5px 5px;
  background: #1d5f6e;
  color: #dfe;
  fill: #dfe;
  display: flex;
  justify-content: center;
  padding-top: 16px;
}
.rlang { width: 52px; flex: none; text-align: center; line-height: 18px; }
.rwifi { margin-left: 7px; }
.rvol { margin-left: 9px; }
.rbatt { margin-left: 7px; }
.rclock { margin-left: auto; text-align: right; font-size: 15px; line-height: 18px; letter-spacing: -0.4px; }
.rmoon { margin: 0 25px 0 15px; }

.name-tag {
  position: absolute;
  left: 0;
  top: 797px;
  width: 152px;
  height: 36px;
  line-height: 36px;
  padding-left: 8px;
  border-radius: 4px;
  background: rgba(78,78,78,.9);
  color: #fff;
  font-size: 17px;
  letter-spacing: -0.3px;
  z-index: 4;
}

.roster {
  flex: 1;
  display: flex;
  flex-direction: column;
  align-items: center;
  padding: 32px 5px 4px 17px;
  color: #fff;
  background: linear-gradient(to right, #191919 0, #191919 10px, #1f1f1f 10px);
}
.avatar {
  width: 232px;
  height: 232px;
  flex: none;
  border-radius: 50%;
  display: flex;
  align-items: center;
  justify-content: center;
  font-size: 93px;
  font-weight: 600;
}
.sg { background: #f8ebcf; color: #8a6a14; }
.ss { background: #eadfdc; color: #4b2e26; margin-top: 15px; }
.who { margin-top: 21px; line-height: 24px; font-size: 17px; letter-spacing: -0.2px; }
.tile {
  margin-top: auto;
  width: 362px;
  height: 200px;
  flex: none;
  background: #333;
  display: flex;
  align-items: center;
  justify-content: center;
}
.kp {
  width: 84px;
  height: 84px;
  border-radius: 50%;
  background: #d8d5e8;
  color: #272260;
  font-size: 35px;
  line-height: 84px;
  text-align: center;
}

/* local taskbar */
.taskbar {
  height: 73px;
  margin-top: 2px;
  flex: none;
  background: linear-gradient(to right, #dae3ee 0, #d8e2ee 73%, #c4f1ee 84%, #c6f2f0 100%);
  display: flex;
  padding-left: 406px;
  color: #1a1a1a;
}
.tslot { width: 66px; position: relative; display: flex; justify-content: center; padding-top: 21px; }
.tslot svg { width: 34px; height: 34px; }
.tslot.run::after {
  content: "";
  position: absolute;
  left: 50%;
  top: 62px;
  width: 8px;
  height: 5px;
  margin-left: -4px;
  border-radius: 3px;
  background: #6a6a6a;
}
.tslot.active { background: #eef2f8; border-radius: 6px; margin: 10px 8px 3px 8px; width: 50px; padding-top: 11px; box-shadow: 2px 1px 0 #e3e9f2, 5px 0 0 -1px #cdd6e2; }
.tslot.active::after {
  content: "";
  position: absolute;
  left: 50%;
  bottom: 2px;
  width: 24px;
  height: 5px;
  margin-left: -12px;
  border-radius: 3px;
  background: #0a78d4;
}
.bdg-red {
  position: absolute;
  right: -1px;
  top: 6px;
  width: 20px;
  height: 20px;
  border-radius: 50%;
  background: #c8102e;
  color: #fff;
  font-size: 14px;
  line-height: 20px;
  text-align: center;
}
.bdg-blue {
  position: absolute;
  left: 26px;
  top: 13px;
  width: 42px;
  height: 24px;
  border-radius: 12px 12px 12px 4px;
  background: #0a78d4;
  color: #fff;
  font-size: 14.500px;
  font-weight: 400;
  line-height: 24px;
  text-align: center;
  z-index: 1;
}
.tray { flex: 1; display: flex; align-items: center; position: relative; }
.chev { margin-left: 28px; }
.micbox {
  width: 47px;
  height: 59px;
  margin-left: 10px;
  margin-top: -1px;
  border-radius: 6px;
  background: #0a66c0;
  border-bottom: 3px solid #06488c;
  color: #fff;
  fill: #fff;
  display: flex;
  align-items: center;
  justify-content: center;
}
.lang { width: 66px; text-align: center; font-size: 16.500px; line-height: 23px; letter-spacing: -0.2px; }
.wifi { margin-left: 12px; }
.vol { margin-left: 11px; }
.batt { margin-left: 9px; }
.clock { margin-left: auto; text-align: right; font-size: 17.500px; line-height: 23px; }
.notif {
  width: 24px;
  height: 24px;
  margin: 0 29px 0 11px;
  border-radius: 50%;
  background: #0a66c0;
  color: #fff;
  font-size: 14px;
  line-height: 24px;
  text-align: center;
}
```
